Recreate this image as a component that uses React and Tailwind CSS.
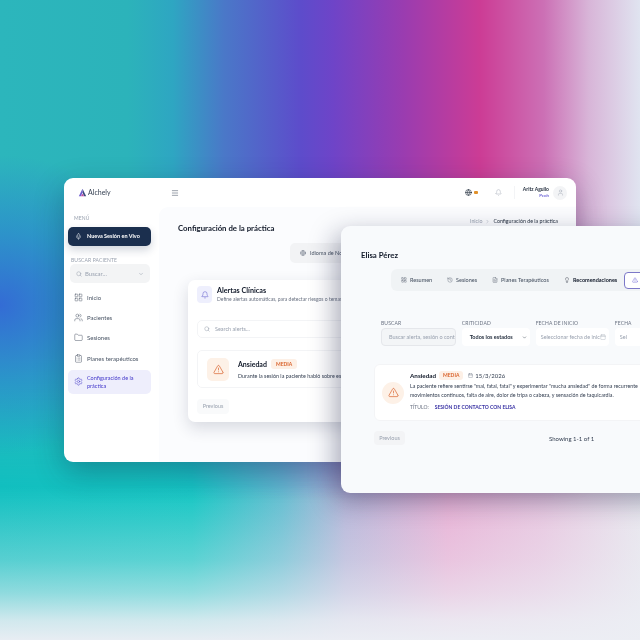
import React from 'react';
import {
  Bell,
  Calendar,
  ChevronDown,
  ChevronRight,
  ClipboardList,
  FileText,
  Folder,
  Globe,
  History,
  LayoutGrid,
  Lightbulb,
  Menu,
  Mic,
  Search,
  Settings,
  TriangleAlert,
  User,
  Users,
} from 'lucide-react';

const navItems = [
  { label: 'Inicio', icon: LayoutGrid },
  { label: 'Pacientes', icon: Users },
  { label: 'Sesiones', icon: Folder },
  { label: 'Planes terapéuticos', icon: ClipboardList },
];

const tabs = [
  { label: 'Resumen', icon: LayoutGrid, className: 'w-[46px]' },
  { label: 'Sesiones', icon: History, className: 'w-[45px]' },
  { label: 'Planes Terapéuticos', icon: FileText, className: 'w-[71px]' },
];

const Logo = () => (
  <svg width="9" height="9" viewBox="0 0 22 20">
    <path d="M11 1 L20 19 L15 19 L11 10 Z" fill="#3b4a7a" />
    <path d="M11 1 L2 19 L7 19 L11 10 Z" fill="#6d5bd0" />
    <path d="M7 19 L11 13 L15 19 Z" fill="#c04aa0" />
  </svg>
);

const Sidebar = () => (
  <aside className="w-[95px] shrink-0 flex flex-col pt-[8px] pl-[4px] pr-[8px]">
    <p className="pl-[6px] text-[5px] leading-[6px] tracking-wide text-gray-400">MENÚ</p>
    <button className="mt-[6px] h-[19px] w-[83px] flex items-center gap-[5px] pl-[7px] rounded-[5px] bg-[#1b2f4e] text-white text-[5.5px] font-bold shadow-[0_4px_8px_rgba(27,47,78,0.2)]">
      <Mic size={7} className="text-gray-300" />
      Nueva Sesión en Vivo
    </button>
    <p className="mt-[11px] pl-[3px] text-[5px] leading-[6px] tracking-wide text-gray-400">BUSCAR PACIENTE</p>
    <div className="mt-[1px] ml-[2px] h-[19px] w-[80px] flex items-center pl-[6px] pr-[6px] rounded-[5px] bg-[#f3f4f5] text-[6px] text-gray-400">
      <Search size={6} />
      <span className="ml-[3px] flex-1">Buscar...</span>
      <ChevronDown size={6} />
    </div>
    <nav className="mt-[4px] flex flex-col">
      {navItems.map(({ label, icon: Icon }) => (
        <div key={label} className="h-[20.4px] flex items-center gap-[4px] pl-[6px] text-[6px] text-gray-600">
          <Icon size={9} strokeWidth={1.3} />
          {label}
        </div>
      ))}
      <div className="mt-[1px] h-[24px] w-[83px] flex items-center gap-[4px] pl-[6px] rounded-[5px] bg-[#eeeefc] text-[5.5px] leading-[8px] text-[#4338ca]">
        <Settings size={9} strokeWidth={1.3} />
        <span>Configuración de la<br />práctica</span>
      </div>
    </nav>
  </aside>
);

const ClinicalAlerts = () => (
  <div className="mt-[17px] ml-[10px] w-[300px] h-[142px] rounded-[7px] bg-white px-[9px] pt-[6px] shadow-[0_6px_16px_rgba(30,40,70,0.16)]">
    <div className="flex items-center gap-[5px]">
      <div className="w-[15px] h-[17px] rounded-[4px] bg-[#eeeffd] flex items-center justify-center text-[#5b55c9]">
        <Bell size={8} strokeWidth={1.5} />
      </div>
      <div>
        <p className="text-[7.2px] leading-[10px] font-bold text-gray-900">Alertas Clínicas</p>
        <p className="text-[5px] leading-[7px] text-gray-500 whitespace-nowrap">Define alertas automáticas, para detectar riesgos o temas críticos</p>
      </div>
    </div>
    <div className="mt-[17px] h-[18px] flex items-center gap-[5px] pl-[6px] rounded-[5px] border border-gray-100 text-[5.5px] text-gray-400">
      <Search size={6} />
      Search alerts...
    </div>
    <div className="mt-[12px] h-[38px] flex items-center gap-[9px] pl-[9px] rounded-[5px] border border-gray-100">
      <div className="w-[22px] h-[23px] rounded-[5px] bg-[#fdf1e7] flex items-center justify-center text-[#d9622b]">
        <TriangleAlert size={11} strokeWidth={1.5} />
      </div>
      <div>
        <div className="flex items-center gap-[4px]">
          <span className="text-[7px] leading-[10px] font-bold text-gray-900">Ansiedad</span>
          <span className="h-[10px] px-[5px] rounded-[3px] bg-[#fdf0e6] text-[5px] leading-[10px] font-bold text-[#d9622b]">MEDIA</span>
        </div>
        <p className="mt-[3px] text-[5.4px] leading-[8px] text-gray-700 whitespace-nowrap">Durante la sesión la paciente habló sobre esto y sobre el trabajo</p>
      </div>
    </div>
    <button className="mt-[11px] h-[15px] w-[32px] rounded-[4px] bg-gray-50 text-[5.5px] text-gray-400">Previous</button>
  </div>
);

const MainWindow = () => (
  <section className="absolute left-[64px] top-[178px] w-[512px] h-[284px] rounded-[9px] bg-white overflow-hidden flex flex-col blur-[0.25px] shadow-[0_10px_30px_rgba(10,30,60,0.32)]">
    <header className="h-[29px] shrink-0 flex items-center pl-[14px] pr-[9px]">
      <Logo />
      <span className="ml-[1px] text-[7px] text-gray-700">Alchely</span>
      <Menu size={8} className="ml-[60px] text-gray-500" />
      <div className="ml-auto flex items-center">
        <Globe size={7} className="text-gray-800" />
        <span className="ml-[2px] w-[4px] h-[3px] rounded-[1px] bg-[#e0912b]" />
        <Bell size={7} strokeWidth={1.4} className="ml-[17px] text-gray-400" />
        <span className="ml-[12px] w-px h-[13px] bg-gray-100" />
        <div className="ml-[8px] text-right">
          <p className="text-[5px] leading-[7px] font-bold text-gray-800">Aritz Aguilo</p>
          <p className="text-[4.5px] leading-[6px] text-[#4338ca]">Pcoh</p>
        </div>
        <div className="ml-[4px] w-[14px] h-[14px] rounded-full bg-gray-100 flex items-center justify-center text-gray-400">
          <User size={7} strokeWidth={1.4} />
        </div>
      </div>
    </header>
    <div className="flex flex-1 min-h-0">
      <Sidebar />
      <main className="flex-1 min-w-0 rounded-tl-[9px] bg-[#fbfcfe] pl-[19px] pr-[18px] overflow-hidden">
        <div className="flex justify-end items-center gap-[3px] pt-[11px] text-[5.3px] leading-[7px]">
          <span className="text-gray-400">Inicio</span>
          <ChevronRight size={5} className="text-gray-400" />
          <span className="text-gray-800">Configuración de la práctica</span>
        </div>
        <h1 className="mt-[-3px] text-[7.8px] leading-[12px] font-bold text-gray-900">Configuración de la práctica</h1>
        <div className="mt-[9px] ml-[112px] w-[300px] h-[20px] flex items-center gap-[4px] pl-[10px] rounded-[5px] bg-[#f2f3f5] text-[5.5px] text-gray-600">
          <Globe size={6} className="text-gray-500" />
          Idioma de Notas
        </div>
        <ClinicalAlerts />
      </main>
    </div>
  </section>
);

const FilterField = ({ label, className, children }) => (
  <div className={className}>
    <p className="text-[5px] leading-[6px] tracking-wide text-gray-500">{label}</p>
    <div className="mt-[2px]">{children}</div>
  </div>
);

const PatientWindow = () => (
  <section className="absolute left-[341px] top-[226px] w-[340px] h-[267px] rounded-[9px] bg-[#f8fafc] overflow-hidden blur-[0.25px] shadow-[-6px_8px_26px_rgba(20,25,60,0.36)]">
    <h2 className="pl-[20px] pt-[23px] text-[7.8px] leading-[12px] font-bold text-gray-900">Elisa Pérez</h2>
    <div className="mt-[8px] ml-[50px] h-[22px] flex items-center rounded-[6px] bg-[#f0f3f5] pl-[10px] text-[5.5px] font-medium text-gray-600 whitespace-nowrap">
      {tabs.map(({ label, icon: Icon, className }) => (
        <div key={label} className={`${className} flex items-center gap-[3px] shrink-0`}>
          <Icon size={6} strokeWidth={1.4} />
          {label}
        </div>
      ))}
      <div className="ml-[1px] flex items-center gap-[3px] text-gray-900 font-bold">
        <Lightbulb size={6} strokeWidth={1.4} />
        Recomendaciones
      </div>
      <div className="ml-[7px] w-[40px] h-[17px] pl-[7px] flex items-center rounded-[4px] border border-[#7c78c8] bg-white text-[#4338ca]">
        <TriangleAlert size={6} strokeWidth={1.4} />
      </div>
    </div>
    <div className="mt-[29px] ml-[40px] flex gap-[6px] whitespace-nowrap">
      <FilterField label="BUSCAR" className="w-[76px]">
        <div className="h-[18px] flex items-center pl-[7px] rounded-[4px] border border-gray-200 bg-[#f3f5f7] text-[5.5px] text-gray-400 overflow-hidden">
          Buscar alerta, sesión o cont
        </div>
      </FilterField>
      <FilterField label="CRITICIDAD" className="w-[77px]">
        <div className="h-[18px] flex items-center justify-between pl-[8px] pr-[3px] rounded-[4px] bg-white text-[5.5px] font-bold text-gray-800">
          Todos los estados
          <ChevronDown size={5} />
        </div>
      </FilterField>
      <FilterField label="FECHA DE INICIO" className="w-[75px]">
        <div className="h-[18px] flex items-center justify-between pl-[5px] pr-[3px] rounded-[4px] bg-white text-[5.5px] text-gray-400">
          Seleccionar fecha de inic
          <Calendar size={6} strokeWidth={1.4} />
        </div>
      </FilterField>
      <FilterField label="FECHA" className="w-[75px]">
        <div className="h-[18px] flex items-center pl-[5px] rounded-[4px] bg-white text-[5.5px] text-gray-400">
          Sel
        </div>
      </FilterField>
    </div>
    <div className="mt-[18px] ml-[33px] h-[57px] flex items-center rounded-[6px] border border-gray-100 bg-white pl-[7px] whitespace-nowrap">
      <div className="w-[22px] h-[22px] rounded-full bg-[#fdf1e7] flex items-center justify-center text-[#d9622b] shrink-0">
        <TriangleAlert size={11} strokeWidth={1.5} />
      </div>
      <div className="ml-[6px] mt-[-3px]">
        <div className="flex items-center">
          <span className="text-[6.3px] leading-[9px] font-bold text-gray-900">Ansiedad</span>
          <span className="ml-[3px] h-[9px] px-[4px] rounded-[3px] bg-[#fdf0e6] text-[5px] leading-[9px] font-bold text-[#d9622b]">MEDIA</span>
          <Calendar size={5} className="ml-[5px] text-gray-600" strokeWidth={1.4} />
          <span className="ml-[2px] text-[6px] leading-[9px] text-gray-700">15/3/2026</span>
        </div>
        <p className="mt-[2px] text-[5.3px] leading-[9px] text-gray-700">La paciente refiere sentirse "mal, fatal, fatal" y experimentar "mucha ansiedad" de forma recurrente</p>
        <p className="text-[5.3px] leading-[9px] text-gray-700">movimientos continuos, falta de aire, dolor de tripa o cabeza, y sensación de taquicardia.</p>
        <p className="mt-[3px] text-[5px] leading-[8px]">
          <span className="text-gray-500">TÍTULO:</span>
          <span className="ml-[6px] font-bold text-[#3730a3]">SESIÓN DE CONTACTO CON ELISA</span>
        </p>
      </div>
    </div>
    <div className="mt-[10px] ml-[33px] flex items-center">
      <button className="h-[14px] w-[31px] rounded-[4px] bg-gray-100 text-[5.5px] text-gray-400">Previous</button>
      <span className="ml-[144px] text-[6px] text-gray-700">Showing 1-1 of 1</span>
    </div>
  </section>
);

const App = () => (
  <div className="relative w-[640px] h-[640px] overflow-hidden font-['Lato','Liberation_Sans',sans-serif] bg-[#eceef4]">
    {/* lower half of the backdrop: teal into pink */}
    <div className="absolute inset-0 bg-[linear-gradient(90deg,#0fc0c0_0%,#14c6c3_30%,#62bdd0_44%,#b4b4d8_54%,#e8b0d5_70%,#e8c6e0_85%,#e8e6ee_100%)]" />
    {/* upper half: the saturated band, masked out towards the bottom */}
    <div className="absolute inset-0 [mask-image:linear-gradient(180deg,#000_0%,#000_56%,transparent_78%)] bg-[linear-gradient(90deg,#2cb6bc_0%,#2cb3ba_20%,#2ea6c2_27%,#4a78c8_35%,#5d4ccb_47%,#6e44c8_52%,#9a3cb0_63%,#cc3c95_75%,#cc70b5_85%,#d8b5d8_92%,#e0e4f0_100%)]" />
    <div className="absolute inset-0 bg-[radial-gradient(ellipse_170px_150px_at_0px_305px,rgba(52,104,214,0.95)_0%,rgba(45,116,214,0.5)_50%,rgba(45,116,214,0)_100%)]" />
    <div className="absolute inset-0 bg-[linear-gradient(180deg,rgba(236,238,244,0)_76%,rgba(236,238,244,0.33)_87.5%,rgba(236,238,244,0.58)_92.6%,rgba(236,238,244,0.88)_97%,rgba(236,238,244,0.98)_100%)]" />
    <MainWindow />
    <PatientWindow />
  </div>
);

export default App;
